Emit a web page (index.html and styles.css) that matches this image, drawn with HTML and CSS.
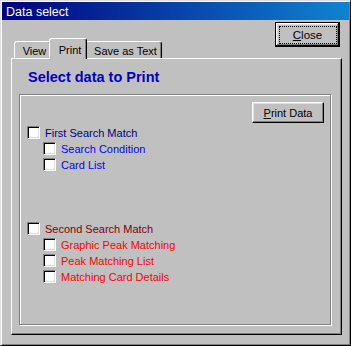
FILE: index.html
```html
<!DOCTYPE html>
<html>
<head>
  <title>Data select</title>
  <link rel="stylesheet" href="styles.css">
</head>
<body>

<div class="window">
  <div class="titlebar"><span class="title">Data select</span></div>

  <div class="header">
    <div class="tabs">
      <div class="tab tab-view">View</div>
      <div class="tab tab-print active">Print</div>
      <div class="tab tab-save">Save as Text</div>
    </div>
    <button class="btn btn-close"><span class="focus"><u>C</u>lose</span></button>
  </div>

  <div class="panel">
    <h3 class="heading">Select data to Print</h3>

    <div class="group">
      <button class="btn btn-print"><u>P</u>rint Data</button>

      <div class="section">
        <label class="row"><input type="checkbox" class="chk"><span class="lbl navy">First Search Match</span></label>
        <label class="row sub"><input type="checkbox" class="chk"><span class="lbl blue">Search Condition</span></label>
        <label class="row sub"><input type="checkbox" class="chk"><span class="lbl blue">Card List</span></label>
      </div>

      <div class="section second">
        <label class="row"><input type="checkbox" class="chk"><span class="lbl maroon">Second Search Match</span></label>
        <label class="row sub"><input type="checkbox" class="chk"><span class="lbl red">Graphic Peak Matching</span></label>
        <label class="row sub"><input type="checkbox" class="chk"><span class="lbl red">Peak Matching List</span></label>
        <label class="row sub"><input type="checkbox" class="chk"><span class="lbl red">Matching Card Details</span></label>
      </div>
    </div>
  </div>
</div>

</body>
</html>
```

FILE: styles.css
```css
body {
  margin: 0;
  background: #c0c0c0;
  font-family: "Liberation Sans", Arial, sans-serif;
  font-size: 11px;
}
.window {
  box-sizing: border-box;
  width: 351px;
  height: 346px;
  padding: 1px;
  background: #c0c0c0;
  border: 1px solid;
  border-color: #dfdfdf #000 #000 #dfdfdf;
  box-shadow: inset 1px 1px 0 #fff, inset -1px -1px 0 #808080;
}
.titlebar {
  height: 18px;
  background: linear-gradient(to right, #000080, #1084d0);
  color: #fff;
  padding-left: 4px;
}
.title {
  display: block;
  font-size: 12.5px;
  line-height: 18px;
  padding-top: 1px;
  height: 17px;
}
.header {
  display: flex;
  justify-content: space-between;
  height: 38px;
}
.tabs {
  display: flex;
  align-items: flex-end;
  align-self: flex-end;
  margin-left: 12px;
}
.tab {
  box-sizing: border-box;
  height: 17px;
  padding: 3px 0 0 4px;
  line-height: 13px;
  text-align: center;
  color: #000;
  border: 1px solid;
  border-bottom: none;
  border-color: #fff #000 transparent #fff;
  border-radius: 3px 3px 0 0;
  box-shadow: inset -1px 0 0 #808080;
  background: #c0c0c0;
}
.tab-view {
  width: 37px;
}
.tab-print {
  width: 34px;
}
.tab-save {
  width: 77px;
}
.tab.active {
  width: 38px;
  height: 21px;
  padding-top: 5px;
  margin: 0 -2px -1px;
  position: relative;
  z-index: 1;
}
.btn {
  box-sizing: border-box;
  font-family: "Liberation Sans", Arial, sans-serif;
  font-size: 11px;
  color: #000;
  background: #c0c0c0;
  padding: 0;
  border: 1px solid;
  border-color: #fff #000 #000 #fff;
  box-shadow: inset -1px -1px 0 #808080, inset 1px 1px 0 #dfdfdf;
}
.btn-close {
  width: 65px;
  height: 25px;
  margin: 2px 9px 0 0;
  border-color: #000;
  box-shadow: inset -1px -1px 0 #000, inset 1px 1px 0 #fff, inset -2px -2px 0 #808080, inset 2px 2px 0 #dfdfdf;
  display: flex;
  align-items: center;
  justify-content: center;
}
.focus {
  box-sizing: border-box;
  width: 58px;
  height: 18px;
  border: 1px dotted #000;
  line-height: 16px;
  font-size: 11.5px;
}
.panel {
  box-sizing: border-box;
  width: 331px;
  height: 277px;
  margin-left: 9px;
  border: 1px solid;
  border-color: #fff #000 #000 #fff;
  box-shadow: inset -1px -1px 0 #808080;
  padding-top: 10px;
}
.heading {
  margin: 0 0 8px 16px;
  font-size: 14.5px;
  line-height: 17px;
  font-weight: bold;
  color: #0000c8;
}
.group {
  box-sizing: border-box;
  width: 312px;
  height: 231px;
  margin-left: 7px;
  border: 1px solid #808080;
  box-shadow: 1px 1px 0 #fff, inset 1px 1px 0 #fff;
  padding: 7px 6px 0 7px;
  display: flex;
  flex-direction: column;
}
.btn-print {
  align-self: flex-end;
  width: 72px;
  height: 21px;
}
.section {
  margin-top: 3px;
}
.section.second {
  margin-top: 48px;
}
.row {
  display: flex;
  height: 16px;
}
.row.sub {
  padding-left: 16px;
}
.chk {
  appearance: none;
  -webkit-appearance: none;
  box-sizing: border-box;
  width: 13px;
  height: 13px;
  margin: 0;
  background: #fff;
  border: 1px solid;
  border-color: #808080 #fff #fff #808080;
  box-shadow: inset 1px 1px 0 #000, inset -1px -1px 0 #dfdfdf;
}
.lbl {
  margin: 1px 0 0 5px;
  line-height: 13px;
}
.navy {
  color: #000080;
}
.blue {
  color: #0000ff;
}
.maroon {
  color: #800000;
}
.red {
  color: #ff0000;
}
```
